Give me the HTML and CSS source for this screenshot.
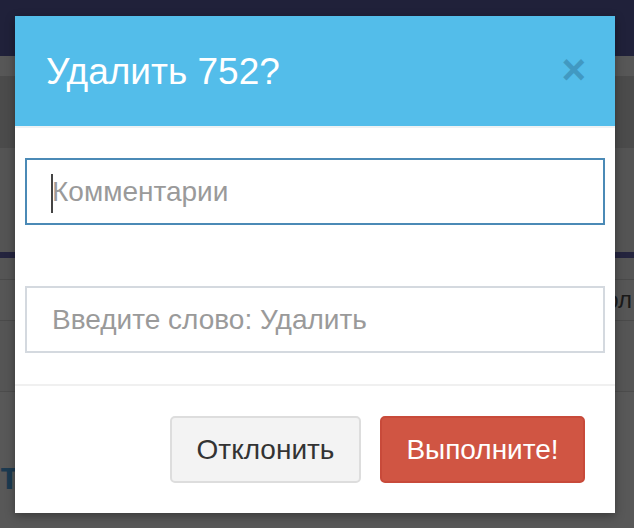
FILE: index.html
```html
<!DOCTYPE html>
<html lang="ru">
<head>
<meta charset="utf-8">
<title>Удалить 752?</title>
<link rel="stylesheet" href="styles.css">
</head>
<body>
<div class="page">
  <div class="nav"></div>
  <div class="band band-a"></div>
  <div class="band band-b"></div>
  <div class="band band-c"></div>
  <div class="stripe"></div>
  <div class="band band-d"></div>
  <div class="row-line"><span class="row-text">Протокол</span></div>
  <div class="band band-e"></div>
  <div class="heading">тарифы</div>
</div>

<div class="modal">
  <div class="modal-header">
    <h4 class="modal-title">Удалить 752?</h4>
    <button class="close" type="button">×</button>
  </div>
  <div class="modal-body">
    <div class="field focused"><span class="caret"></span><span class="placeholder">Комментарии</span></div>
    <div class="field"><span class="placeholder">Введите слово: Удалить</span></div>
  </div>
  <div class="modal-footer">
    <button class="btn btn-default" type="button">Отклонить</button>
    <button class="btn btn-danger" type="button">Выполните!</button>
  </div>
</div>
</body>
</html>
```

FILE: styles.css
```css
html, body {
  margin: 0;
  padding: 0;
}
body {
  width: 634px;
  height: 528px;
  overflow: hidden;
  background: #575757;
  font-family: "Liberation Sans", Arial, Helvetica, sans-serif;
  position: relative;
}
.page {
  display: flex;
  flex-direction: column;
  height: 528px;
  overflow: hidden;
}
.nav { height: 56px; background: #20213a; flex: none; }
.band-a { height: 20px; background: #575757; flex: none; }
.band-b { height: 72px; background: #4b4b4b; flex: none; }
.band-c { height: 104px; background: #545454; flex: none; }
.stripe { height: 6px; background: #24243e; flex: none; }
.band-d { height: 21px; background: #555555; flex: none; }
.row-line {
  flex: none;
  height: 40px;
  border-top: 1px solid #4a4a4a;
  border-bottom: 1px solid #4a4a4a;
  background: #565656;
  display: flex;
  align-items: center;
  justify-content: flex-end;
  padding-right: 2px;
}
.row-text {
  font-size: 24px;
  color: #1a1a1a;
  white-space: nowrap;
}
.band-e { flex: none; height: 70px; background: #555555; border-bottom: 1px solid #4c4c4c; }
.heading {
  flex: 1;
  font-size: 38px;
  font-weight: bold;
  color: #1c3a50;
  padding-top: 63px;
  padding-left: 0;
  white-space: nowrap;
  background: #585858;
  overflow: hidden;
}

.modal {
  position: absolute;
  left: 15px;
  top: 16px;
  width: 600px;
  height: 497px;
  background: #ffffff;
  display: flex;
  flex-direction: column;
  box-shadow: 0 3px 9px rgba(0, 0, 0, 0.35);
}
.modal-header {
  height: 110px;
  background: #53bdea;
  border-bottom: 2px solid #eef2f4;
  display: flex;
  align-items: center;
  justify-content: space-between;
  padding: 0 29px 0 31px;
}
.modal-title {
  margin: 0;
  font-size: 37px;
  font-weight: normal;
  color: #ffffff;
  line-height: 1;
}
.close {
  border: 0;
  background: none;
  padding: 0;
  font-family: "Liberation Sans", Arial, sans-serif;
  font-size: 42px;
  font-weight: bold;
  line-height: 1;
  color: #4199c2;
  margin-top: -2px;
}
.modal-body {
  padding: 30px 10px 31px;
  display: flex;
  flex-direction: column;
  gap: 61px;
  border-bottom: 2px solid #f0f0f0;
}
.field {
  height: 67px;
  box-sizing: border-box;
  border: 2px solid #d4d9df;
  display: flex;
  align-items: center;
  padding-left: 25px;
  position: relative;
}
.field.focused {
  border-color: #4b8ab6;
}
.placeholder {
  font-size: 28px;
  color: #9a9a9a;
}
.caret {
  position: absolute;
  left: 24px;
  top: 14px;
  width: 2px;
  height: 39px;
  background: #444;
}
.modal-footer {
  flex: 1;
  display: flex;
  justify-content: flex-end;
  align-items: flex-start;
  gap: 19px;
  padding: 30px 30px 0;
}
.btn {
  height: 67px;
  border-radius: 5px;
  font-family: "Liberation Sans", Arial, sans-serif;
  font-size: 28px;
  padding: 0;
  box-sizing: border-box;
}
.btn-default {
  width: 191px;
  background: #f3f3f3;
  border: 2px solid #dddddd;
  color: #333333;
}
.btn-danger {
  width: 205px;
  background: #d05543;
  border: 2px solid #c84a3a;
  color: #ffffff;
}
```
